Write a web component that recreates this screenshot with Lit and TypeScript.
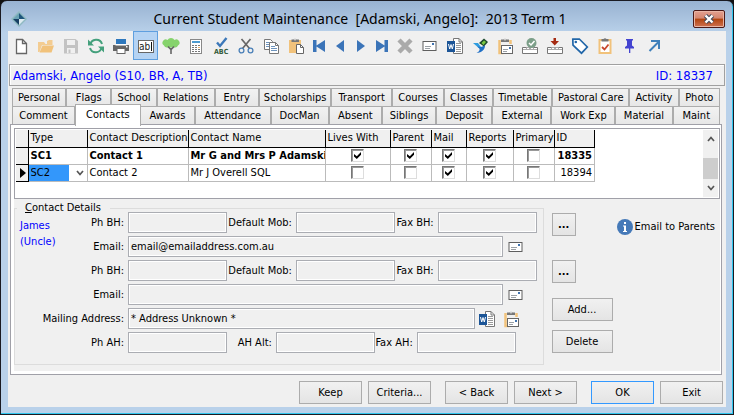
import { LitElement, html, css, svg, nothing, TemplateResult } from "lit";
import { customElement } from "lit/decorators.js";
import { classMap } from "lit/directives/class-map.js";
import { styleMap } from "lit/directives/style-map.js";

const envelope = svg`<rect x="1" y="3.500" width="13" height="9" fill="#fff" stroke="#5f5f5f"/>
  <rect x="10" y="5" width="2" height="2" fill="#3f72af"/>
  <path d="M3 8.500h6M3 10.500h5" stroke="#9aa0a6"/>`;

const wordDoc = svg`<path d="M6.500 .5h5.500l3.500 3.500v11.500h-9z" fill="#fff" stroke="#777"/>
  <path d="M12 .5v3.500h3.500" fill="none" stroke="#777"/>
  <path d="M9 5.500h5M9 7.500h5M9 9.500h5M9 11.500h5M9 13.500h5" stroke="#999"/>
  <rect x="0" y="3" width="8" height="11" fill="#1c5597"/>
  <path d="M1.500 6l1.200 5 1.300-4.500 1.300 4.500 1.200-5" fill="none" stroke="#fff"/>`;

const clipMail = svg`<path d="M2.500 2v13h4M13.500 2v4" fill="none" stroke="#f1c27b" stroke-width="2.500"/>
  <path d="M4 1.500h2.500a1.800 1.800 0 0 1 3 0h2.500v2.500h-8z" fill="#777"/><circle cx="8" cy="1.700" r=".8" fill="#fff"/>
  <rect x="4.500" y="7.500" width="11" height="8" fill="#fff" stroke="#666"/>
  <rect x="12" y="9" width="2" height="2" fill="#3f72af"/><path d="M6 11.500h5M6 13.500h4" stroke="#9aa0a6"/>`;

const trayBase = svg`<path d="M.5 9.500h15v6H.5z" fill="#fff" stroke="#777"/>
  <path d="M4.500 11.500v-2h3v2M8.500 11.500v-2h3v2M1 11.500h14" fill="none" stroke="#aaa"/>`;

const icons: Record<string, TemplateResult> = {
  new: svg`<path d="M3.500 1.500h6l4 4v10h-10z" fill="#fff" stroke="#666" stroke-width="1.300"/><path d="M9.500 1.500v4h4" fill="none" stroke="#666" stroke-width="1.300"/>`,
  open: svg`<path d="M0 14V4h6l1.500 2H9V3l2-1h3.500v5H4L1.500 14z" fill="#f3cc91"/><path d="M1.500 14.500L4.500 7.500H16l-2.500 7z" fill="#f1c27b"/>`,
  save: svg`<path d="M1 1h11.500l2.500 2v12.500H1z" fill="#c3c3c3"/><rect x="4" y="2" width="8" height="5" fill="#f0f0f0"/><rect x="4" y="10" width="8" height="5" fill="#f0f0f0"/><rect x="5.500" y="11.500" width="2" height="3.500" fill="#c3c3c3"/>`,
  refresh: svg`<path d="M2.300 7a6 6 0 0 1 11.700-1M13.700 9a6 6 0 0 1-11.700 1" fill="none" stroke="#44a07c" stroke-width="2"/>
    <path d="M0 1.500v6h6zM16 14.500V8.500H10z" fill="#44a07c"/>`,
  print: svg`<rect x="3" y="1" width="10" height="5" fill="#2e78bd"/><path d="M0 7h16v6H0z" fill="#666"/><path d="M2.500 6h11v1.500h-11z" fill="#fff"/><rect x="4" y="10.500" width="8" height="5" fill="#fff" stroke="#666"/><rect x="13" y="8" width="1.500" height="1.500" fill="#fff"/>`,
  edit: svg`<rect x=".5" y="2.500" width="15" height="12" fill="#fff" stroke="#666"/><text x="1" y="12" font-size="10" font-family="DejaVu Sans Condensed, sans-serif" fill="#222">ab</text><path d="M13.500 4v9" stroke="#111"/>`,
  tree: svg`<path d="M8 0a4 4 0 0 1 3.500 2 3.200 3.200 0 0 1 3.500 5.500 3 3 0 0 1-3 2H4a3 3 0 0 1-3-2A3.200 3.200 0 0 1 4.500 2 4 4 0 0 1 8 0z" fill="#86d36c"/><path d="M5 8.500l3 3 3-3M8 10v6" fill="none" stroke="#666" stroke-width="1.600"/>`,
  calc: svg`<rect x="2.500" y="1.500" width="11" height="14" fill="#fff" stroke="#888"/><rect x="4" y="3" width="8" height="2" fill="#4c9bd0"/>
    <path d="M4 7.500h8M4 9.500h8M4 11.500h8M4 13.500h8" stroke="#777" stroke-dasharray="2 1"/><path d="M10 9.500h2" stroke="#f0b060"/>`,
  spell: svg`<path d="M4 4.500l3 3.500 6.500-8" fill="none" stroke="#3c78b9" stroke-width="2.400"/><text x="1" y="16" font-size="7" font-weight="bold" font-family="DejaVu Sans Condensed, sans-serif" fill="#355c3c">ABC</text>`,
  cut: svg`<path d="M3.500 1l8 9.500M12.500 1l-8 9.500" stroke="#666" stroke-width="1.700"/><circle cx="3.500" cy="12.500" r="2.400" fill="none" stroke="#4b80b8" stroke-width="1.300"/><circle cx="12.500" cy="12.500" r="2.400" fill="none" stroke="#4b80b8" stroke-width="1.300"/>`,
  copy: svg`<path d="M1.500 1.500h6l2 2v8h-8z" fill="#fff" stroke="#777"/><path d="M3 4.500h4M3 6.500h5M3 8.500h4" stroke="#6e94bd"/><path d="M6.500 4.500h6l3 3v8h-9z" fill="#fff" stroke="#777"/><path d="M12.500 4.500v3h3" fill="none" stroke="#777"/><path d="M8 8.500h4M8 10.500h6M8 12.500h6" stroke="#6e94bd"/>`,
  paste: svg`<path d="M1 2h12v13H1z" fill="#f1c27b"/><path d="M3.500 1.500h2a1.800 1.800 0 0 1 3 0h2.500V4h-7.500z" fill="#777"/><circle cx="7" cy="1.700" r=".8" fill="#fff"/><path d="M8.500 6.500h4l3 3v6h-7z" fill="#fff" stroke="#666"/><path d="M12.500 6.500v3h3" fill="none" stroke="#666"/>`,
  first: svg`<path d="M2 2h3.500v5.500L14 2v12L5.500 8.500V14H2z" fill="#3b74b8"/>`,
  prev: svg`<path d="M12 2v12L4 8z" fill="#3b74b8"/>`,
  next: svg`<path d="M4 2v12l8-6z" fill="#3b74b8"/>`,
  last: svg`<path d="M14 2h-3.500v5.500L2 2v12l8.500-5.500V14H14z" fill="#3b74b8"/>`,
  remove: svg`<path d="M2 2l12 12M14 2L2 14" stroke="#aaa" stroke-width="4.500"/>`,
  mail: envelope,
  word: wordDoc,
  bird: svg`<path d="M1 5h5l3 4-1 2z" fill="#2f9de0"/><path d="M7 5l5-4.500 4 3.500-4 4.500z" fill="#1d4a2c"/><path d="M9.500 5L12 2.500l2 1.500-2.500 3z" fill="#7ac943"/><path d="M5 8.500l4 .5 4-1.500c0 4-3 7-8.500 7.500 2.500-1 3.500-3 3-4.500z" fill="#1f6fc5"/>`,
  clipMail,
  trayCheck: svg`${trayBase}<circle cx="9.500" cy="5" r="5" fill="#7c9f89"/><path d="M7 5l2 2 3.500-4" fill="none" stroke="#fff" stroke-width="1.500"/>`,
  trayDown: svg`${trayBase}<path d="M6.500 0h2.500v3h3L7.700 7.500 3.500 3h3z" fill="#a52a12"/>`,
  tag: svg`<path d="M.8 1.200l6.500-.2 8 8-5.800 6.200-8.500-8z" fill="#fff" stroke="#2166a8" stroke-width="1.700"/><circle cx="3.800" cy="4" r="1.300" fill="#2166a8"/>`,
  clipCheck: svg`<rect x="2.500" y="2" width="11" height="13" fill="#fff" stroke="#f1c27b" stroke-width="2"/><path d="M4.500 1h2a1.800 1.800 0 0 1 3 0h2v2.500h-7z" fill="#777"/><path d="M5 9l2.500 2.500L11.500 6.500" fill="none" stroke="#c8472c" stroke-width="1.800"/>`,
  pin: svg`<path d="M4 1h7v1.500h-1v5l2 1.500v1.500H3V9l2-1.500v-5H4zM7 10h1.300v5H7z" fill="#4444d0"/>`,
  jump: svg`<path d="M2.500 13l9-9" stroke="#3f80bb" stroke-width="2"/><path d="M4 2h9v9h-2V4H4z" fill="#3f80bb"/>`,
};

const icon = (name: string) => html`<svg class="icon" viewBox="0 0 16 16" aria-hidden="true">${icons[name]}</svg>`;

const TOOLS: [string, string][] = [
  ["new", "New"], ["open", "Open"], ["save", "Save"], ["refresh", "Refresh"], ["print", "Print"],
  ["edit", "Edit mode"], ["tree", "Family tree"], ["calc", "Calculator"], ["spell", "Spelling"],
  ["cut", "Cut"], ["copy", "Copy"], ["paste", "Paste"], ["first", "First"], ["prev", "Previous"],
  ["next", "Next"], ["last", "Last"], ["remove", "Delete record"], ["mail", "Email"], ["word", "Word"],
  ["bird", "Sync"], ["clipMail", "Copy address"], ["trayCheck", "Accept"], ["trayDown", "Import"],
  ["tag", "Tag"], ["clipCheck", "Tasks"], ["pin", "Pin"], ["jump", "Jump"],
];
const NAV = new Set(["first", "prev", "next", "last"]);

const TABS: [string, number][][] = [
  [["Personal", 54], ["Flags", 45], ["School", 45], ["Relations", 58], ["Entry", 44], ["Scholarships", 73],
   ["Transport", 61], ["Courses", 52], ["Classes", 49], ["Timetable", 59], ["Pastoral Care", 78],
   ["Activity", 49], ["Photo", 41]],
  [["Comment", 63], ["Contacts", 66], ["Awards", 55], ["Attendance", 76], ["DocMan", 58], ["Absent", 53],
   ["Siblings", 54], ["Deposit", 56], ["External", 59], ["Work Exp", 64], ["Material", 57], ["Maint", 47]],
];

const FLAGS = ["Lives With", "Parent", "Mail", "Reports", "Primary"];
const CONTACTS = [
  { type: "SC1", desc: "Contact 1", name: "Mr G and Mrs P Adamski", flags: [1, 1, 1, 1, 0], id: "18335", bold: true },
  { type: "SC2", desc: "Contact 2", name: "Mr J Overell SQL", flags: [0, 0, 1, 1, 0], id: "18394", bold: false },
];

@customElement("app-root")
export class AppRoot extends LitElement {
  static styles = css`
    :host { display: block; font: 11px/14px "DejaVu Sans Condensed", "DejaVu Sans", sans-serif; color: #000; background: #111; }
    * { box-sizing: border-box; }
    button, input, select { font: inherit; color: inherit; margin: 0; }
    .window { min-height: 100vh; display: flex; flex-direction: column; padding: 0 7px 7px;
      border: 1px solid #1a1a22; border-radius: 7px 7px 0 0;
      background: linear-gradient(#98b2d1, #b9d1ea 32px); box-shadow: inset -1px -1px 0 #2fc6ee; }
    .title { height: 30px; display: flex; align-items: center; padding: 6px 1px 0 3px; }
    .logo { width: 16px; height: 16px; }
    .title h1 { flex: 1; margin: 0; text-align: center; font: 14px/20px "Noto Sans", "Open Sans", sans-serif; white-space: pre; }
    .close { width: 32px; height: 18px; padding: 0; display: grid; place-items: center; border: 1px solid #4c1a18; border-radius: 2px;
      background: linear-gradient(#e3a090, #d58770 45%, #b1440f 50%, #cf7252); box-shadow: inset 0 0 0 1px #e8b5a5; }
    .close svg { width: 14px; height: 12px; }
    .body { flex: 1; display: flex; flex-direction: column; background: #f0f0f0; }
    .toolbar { display: flex; height: 33px; align-items: flex-start; }
    .tool { width: 25px; height: 29px; padding: 0; display: grid; place-items: center; border: 1px solid transparent; background: none; }
    .tool.nav { width: 21px; }
    .tool.on { background: #b5d3f3; border-color: #5f9fdf; }
    .icon { width: 16px; height: 16px; display: block; overflow: visible; }
    .student { display: flex; justify-content: space-between; margin: 0 1px; padding: 0 11px 0 3px; height: 22px;
      border: 1px solid #a0a0a0; box-shadow: inset 1px 1px #fff; color: #00f;
      font-size: 13px; line-height: 21px; }
    .tabs { margin: 2px 6px 0 4px; }
    .tabrow { display: flex; height: 18px; border: 1px solid #acacac; border-bottom: 0; }
    .tab { border: 0; border-right: 2px solid #acacac; padding: 0; min-width: 0; white-space: nowrap;
      background: linear-gradient(#f2f2f2, #e7e7e7); line-height: 16px; }
    .tab:last-child { border-right: 0; }
    .tab.active { position: relative; margin: -3px 0 -2px -1px; border: 1px solid #acacac; border-bottom: 0; background: #fff; padding: 0 0 1px; }
    .panel { flex: 1; margin: 0 4px 0 2px; border: 1px solid #a0a0a8; padding: 3px 1px 3px 3px; background: #fff; display: flex; flex-direction: column; }
    .gridbox { display: flex; justify-content: space-between; height: 71px; border: 1px solid #a0a0a8; padding: 1px; }
    table { border-collapse: collapse; table-layout: fixed; width: 579px; height: 51px; align-self: flex-start; }
    th, td { padding: 0 2px; border-right: 1px solid #bbb; border-bottom: 1px solid #bbb; white-space: nowrap; overflow: hidden; text-align: left; height: 17px; }
    th { font-weight: 400; background: #f0f0f0; border-color: #000; }
    td.mark { background: #f0f0f0; border-color: #000; padding: 0; }
    td.mark svg { display: block; width: 8px; height: 12px; margin-left: 3px; }
    .bold { font-weight: 700; }
    td.num { text-align: right; }
    td.tick { padding: 0; }
    td.type { padding: 0; }
    .type span { padding-left: 2px; }
    .c-mark { width: 12px; } .c-type { width: 59px; } .c-desc { width: 101px; } .c-name { width: 137px; }
    .c-f0 { width: 65px; } .c-f1 { width: 41px; } .c-f2 { width: 35px; } .c-f3 { width: 47px; } .c-f4 { width: 41px; }
    input[type="checkbox"] { appearance: none; display: block; width: 13px; height: 13px; margin: 0 auto; background: #fff;
      border: 1px solid; border-color: #777 #ddd #ddd #777; box-shadow: inset 1px 1px #999; }
    input:checked::before { content: ""; display: block; width: 7px; height: 7px; margin: 2px; background: #000;
      clip-path: polygon(0 28%, 40% 62%, 100% 0, 100% 40%, 40% 100%, 0 66%); }
    .pick { display: flex; height: 16px; align-items: center; position: relative; }
    .pick select { appearance: none; width: 100%; height: 16px; border: 0; padding: 0 2px; border-radius: 0;
      background: linear-gradient(90deg, #3397fb 40px, #fff 40px); }
    .pick svg { position: absolute; right: 3px; width: 8px; height: 6px; pointer-events: none; }
    .scroll { width: 15px; display: flex; flex-direction: column; align-items: center; background: #f0f0f0; }
    .scroll svg { width: 8px; height: 6px; margin: 6px 0; }
    .thumb { width: 15px; height: 21px; margin: 10px 0 auto; background: #cdcdcd; }
    .lower { flex: 1; display: flex; align-items: flex-start; background: #f0f0f0; padding: 5px 5px 6px 0; }
    fieldset { flex: 1; min-width: 0; margin: 0; padding: 0 6px 11px 0; border: 1px solid #dcdcdc; }
    legend { margin-left: 2px; padding: 0 9px 0 8px; line-height: 8px; }
    u { text-underline-offset: 1px; }
    .stack { display: flex; flex-direction: column; gap: 3px; flex: 1; min-width: 0; }
    .split { display: flex; }
    .who { flex: none; width: 45px; padding: 6px 0 0 5px; color: #00f; line-height: 16px; margin: 0; }
    .row { display: flex; align-items: center; height: 21px; }
    .row label { text-align: right; padding-right: 4px; white-space: nowrap; flex: none; }
    .l0 { width: 68px; } .l1 { width: 69px; } .l2 { width: 43px; }
    .w0 { width: 113px; } .w1 { width: 49px; } .w2 { width: 42px; }
    .field { flex: 1; min-width: 0; height: 21px; padding: 0 2px; background: #f0f0f0; border: 1px solid #abadb3; box-shadow: inset 0 0 0 1px #fff; outline: 0; border-radius: 0; }
    .icons { flex: none; width: 34px; padding-left: 5px; }
    .icons.two { width: 62px; display: flex; gap: 8px; padding-left: 4px; }
    .short { padding-right: 21px; }
    .mini { display: block; border: 0; padding: 0; background: none; }
    .btn { height: 23px; border: 1px solid #acacac; background: linear-gradient(#f1f1f1, #e4e4e4); padding: 0; }
    .side { display: grid; grid-template-columns: 24px 37px auto; row-gap: 9px; margin: 9px 0 0 8px; }
    .side .btn { grid-column: 1 / 3; }
    .side .dots { grid-column: 1; font-weight: 700; margin-bottom: 15px; }
    .side .second { margin-bottom: 6px; }
    .info { grid-column: 3; display: flex; align-items: center; gap: 2px; padding-left: 4px; height: 27px; text-decoration: none; color: inherit; white-space: nowrap; }
    .footer { display: flex; justify-content: flex-end; gap: 6px; padding: 6px 3px 3px 0; }
    .footer .btn { width: 63px; }
    .footer .sep { margin-left: 8px; }
    .footer .btn.ok { border: 1px solid #3399ff; }
  `;

  private field(id: string, label: string, cls: string, value = "") {
    return html`<label class=${cls} for=${id}>${label}</label><input class="field" id=${id} type="text" readonly .value=${value} />`;
  }

  private phoneRow(n: number) {
    return html`<div class="row">
      ${this.field(`ph${n}`, "Ph BH:", "l0")}${this.field(`mob${n}`, "Default Mob:", "l1")}${this.field(`fax${n}`, "Fax BH:", "l2")}
    </div>`;
  }

  private emailRow(n: number, value = "") {
    return html`<div class="row">
      ${this.field(`email${n}`, "Email:", "l0", value)}
      <div class="icons"><button class="mini" aria-label="Send email">${icon("mail")}</button></div>
    </div>`;
  }

  render() {
    return html`<div class="window">
      <header class="title">
        <svg class="logo" viewBox="0 0 16 16" aria-hidden="true"><path d="M8 0l8 8-8 8-8-8z" fill="#8fb9c2"/><path d="M8 2v6H2z" fill="#6ba3b5"/><path d="M8 2l6 6H8z" fill="#1e567c"/><path d="M2 8h6v6z" fill="#174064"/><path d="M8 8h6l-6 6z" fill="#dceaf0"/></svg>
        <h1>Current Student Maintenance  [Adamski, Angelo]:  2013 Term 1</h1>
        <button class="close" aria-label="Close"><svg viewBox="0 0 14 12"><path d="M3.500 2.500l7 7M10.500 2.500l-7 7" stroke="#444b5c" stroke-width="4.500"/><path d="M3.500 2.500l7 7M10.500 2.500l-7 7" stroke="#fff" stroke-width="2.400"/></svg></button>
      </header>
      <main class="body">
        <nav class="toolbar">
          ${TOOLS.map(([k, t]) => html`<button class=${classMap({ tool: true, nav: NAV.has(k), on: k === "edit" })} aria-label=${t}>${icon(k)}</button>`)}
        </nav>
        <div class="student"><span>Adamski, Angelo (S10, BR, A, TB)</span><span>ID: 18337</span></div>
        <div class="tabs" role="tablist">
          ${TABS.map(row => html`<div class="tabrow">${row.map(([t, w]) => html`<button role="tab"
            class=${classMap({ tab: true, active: t === "Contacts" })} style=${styleMap({ flex: `${w} 1 0` })}>${t}</button>`)}</div>`)}
        </div>
        <section class="panel">
          <div class="gridbox">
            <table>
              <thead><tr><th class="c-mark"></th><th class="c-type">Type</th><th class="c-desc">Contact Description</th><th class="c-name">Contact Name</th>
                ${FLAGS.map((f, i) => html`<th class="c-f${i}">${f}</th>`)}<th>ID</th></tr></thead>
              <tbody>${CONTACTS.map(c => html`<tr class=${c.bold ? "bold" : ""}>
                <td class="mark">${c.bold ? nothing : html`<svg viewBox="0 0 8 12"><path d="M1 1l6 5-6 5z"/></svg>`}</td>
                <td class="type">${c.bold ? html`<span>${c.type}</span>` : html`<div class="pick"><select aria-label="Type"><option>${c.type}</option></select>
                  <svg viewBox="0 0 8 6"><path d="M1 1l3 3.500L7 1" fill="none" stroke="#555" stroke-width="1.700"/></svg></div>`}</td>
                <td>${c.desc}</td><td>${c.name}</td>
                ${c.flags.map((v, i) => html`<td class="tick"><input type="checkbox" aria-label=${FLAGS[i]} .checked=${!!v} /></td>`)}
                <td class="num">${c.id}</td></tr>`)}</tbody>
            </table>
            <div class="scroll">
              <svg viewBox="0 0 8 6"><path d="M1 5l3-3.500L7 5" fill="none" stroke="#555" stroke-width="1.700"/></svg>
              <div class="thumb"></div>
              <svg viewBox="0 0 8 6"><path d="M1 1l3 3.500L7 1" fill="none" stroke="#555" stroke-width="1.700"/></svg>
            </div>
          </div>
          <div class="lower">
            <fieldset>
              <legend><u>C</u>ontact Details</legend>
              <div class="stack">
                <div class="split">
                  <p class="who">James<br />(Uncle)</p>
                  <div class="stack">
                    ${this.phoneRow(1)}${this.emailRow(1, "email@emailaddress.com.au")}${this.phoneRow(2)}${this.emailRow(2)}
                  </div>
                </div>
                <div class="row">
                  ${this.field("mailing", "Mailing Address:", "w0", "* Address Unknown *")}
                  <div class="icons two"><button class="mini" aria-label="Open in Word">${icon("word")}</button><button class="mini" aria-label="Copy address">${icon("clipMail")}</button></div>
                </div>
                <div class="row short">
                  ${this.field("phah", "Ph AH:", "w0")}${this.field("ahalt", "AH Alt:", "w1")}${this.field("faxah", "Fax AH:", "w2")}
                </div>
              </div>
            </fieldset>
            <div class="side">
              <button class="btn dots" aria-label="More phone details">...</button>
              <a class="info" href="#"><svg class="icon" viewBox="0 0 16 16" aria-hidden="true"><circle cx="8" cy="8" r="8" fill="#4579b8"/><path d="M7 3h2v2H7zM6 6.500h3V12h1v1H6v-1h1V7.500H6z" fill="#fff"/></svg>Email to Parents</a>
              <button class="btn dots second" aria-label="More details">...</button>
              <button class="btn">Add...</button>
              <button class="btn">Delete</button>
            </div>
          </div>
        </section>
        <footer class="footer">
          <button class="btn">Keep</button><button class="btn">Criteria...</button>
          <button class="btn sep">&lt; Back</button><button class="btn">Next &gt;</button>
          <button class="btn ok sep">OK</button><button class="btn">Exit</button>
        </footer>
      </main>
    </div>`;
  }
}
